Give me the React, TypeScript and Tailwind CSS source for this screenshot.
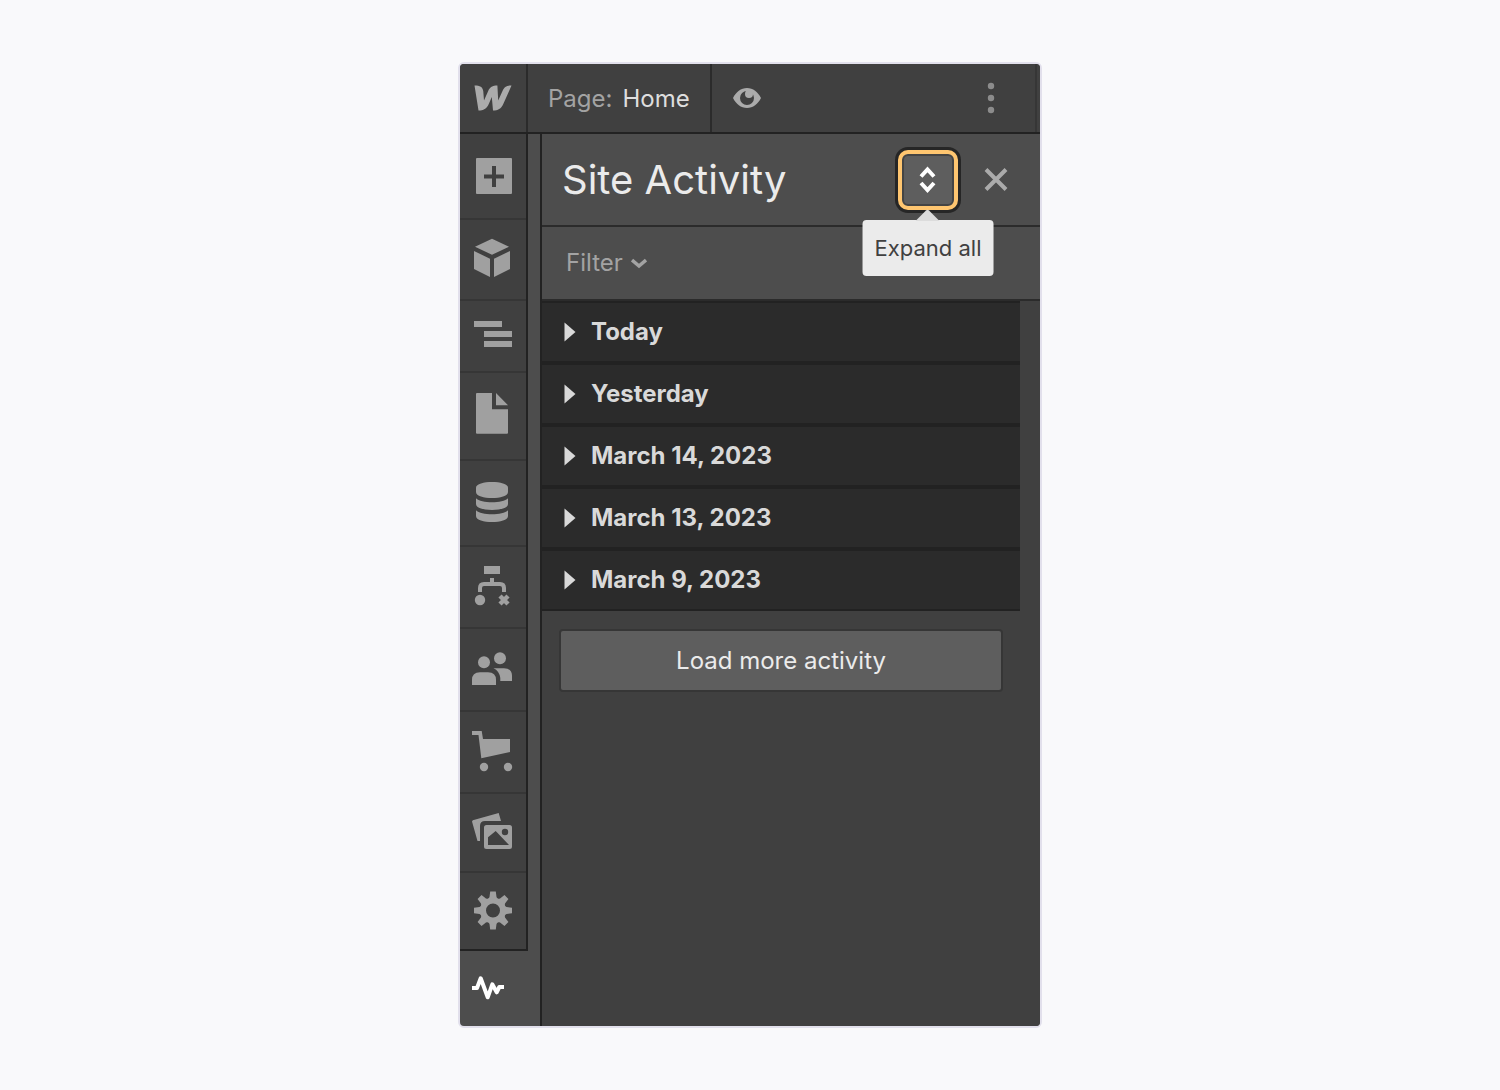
import { ReactNode, useState } from 'react'

type NavItem = {
    label: string
    height: string
    icon: ReactNode
}

const navItems: NavItem[] = [
    {
        label: 'Add elements',
        height: 'h-[86px]',
        icon: <path fillRule="evenodd" d="M6 4h34a1 1 0 0 1 1 1v34a1 1 0 0 1-1 1H6a1 1 0 0 1-1-1V5a1 1 0 0 1 1-1zM21 12v8.500h-8v4h8V33h4v-8.500h8v-4h-8V12z" />,
    },
    {
        label: 'Components',
        height: 'h-[81px]',
        icon: <path d="M4 8.700 21 .7l17 8-17 8zM3 13l16 7.700V39L3 31zM23 20.700 39 13v18l-16 8z" />,
    },
    {
        label: 'Navigator',
        height: 'h-[72px]',
        icon: <path d="M3 7h28v6H3zM13 17h28v6H13zM13 27h28v6H13z" />,
    },
    {
        label: 'Pages',
        height: 'h-[88px]',
        icon: <path d="M6-1h15v16.300h16V38.700a1 1 0 0 1-1 1H6a1 1 0 0 1-1-1V0a1 1 0 0 1 1-1zM25-1l12 12.300H25z" />,
    },
    {
        label: 'CMS',
        height: 'h-[86px]',
        icon: (
            <>
                <path d="M5 6.500C5-1 37-1 37 6.500v4.500c0 8-32 8-32 0z" />
                <path d="M5 17.300c5 5.400 27 5.400 32 0V23c0 8-32 8-32 0z" />
                <path d="M5 29.300c5 5.400 27 5.400 32 0V35c0 8-32 8-32 0z" />
            </>
        ),
    },
    {
        label: 'Logic',
        height: 'h-[82px]',
        icon: (
            <>
                <path d="M13 1h16v8H13z" />
                <path d="M9 27v-4q0-4 4-4h16q4 0 4 4v4M21 13v6" fill="none" stroke="currentColor" strokeWidth="4" />
                <circle cx="9" cy="35" r="5.200" />
                <path d="m29 31 8 8m0-8-8 8" stroke="currentColor" strokeWidth="4.500" />
            </>
        ),
    },
    {
        label: 'Users',
        height: 'h-[83px]',
        icon: (
            <>
                <circle cx="13" cy="14.300" r="6" />
                <circle cx="29" cy="10.300" r="6" />
                <path d="M1 37v-5q0-7.700 8-7.700h8q8 0 8 7.700v5z" />
                <path d="M22.500 20.300H33q8 0 8 7.500V33H29.300v-3q-1-7-6.800-9.700z" />
            </>
        ),
    },
    {
        label: 'Ecommerce',
        height: 'h-[82px]',
        icon: (
            <>
                <path d="M1 1h9.700L12 9h27v13l-28.700 6.300L7.500 5H1z" />
                <circle cx="13" cy="37" r="4.200" />
                <circle cx="37" cy="37" r="4.200" />
            </>
        ),
    },
    {
        label: 'Assets',
        height: 'h-[79px]',
        icon: (
            <>
                <path d="M1.800 9.200 27.700 2 30 10H14q-5 0-5 5v15H6.500L1 10.500z" />
                <path fillRule="evenodd" d="M15.500 14h23a2.500 2.500 0 0 1 2.500 2.500v19a2.500 2.500 0 0 1-2.500 2.500h-23a2.500 2.500 0 0 1-2.500-2.500v-19a2.500 2.500 0 0 1 2.500-2.500zM17 26.300V34h21L24.700 20zM34 17.800a3.200 3.200 0 1 0 0 6.400 3.200 3.200 0 0 0 0-6.400z" />
            </>
        ),
    },
    {
        label: 'Settings',
        height: 'h-[78px]',
        icon: (
            <>
                <circle cx="22" cy="21.500" r="10" fill="none" stroke="currentColor" strokeWidth="6" />
                {[0, 45, 90, 135, 180, 225, 270, 315].map((angle) => (
                    <path key={angle} d="M17 10.500 18.500 8l.7-5.500h5.600l.7 5.500 1.500 2.500z" transform={`rotate(${angle} 22 21.500)`} />
                ))}
            </>
        ),
    },
]

const groups = ['Today', 'Yesterday', 'March 14, 2023', 'March 13, 2023', 'March 9, 2023']

function NavIcon({ children }: { children: ReactNode }) {
    return (
        <svg className="size-11 overflow-visible" viewBox="0 0 44 44" fill="currentColor" aria-hidden="true">
            {children}
        </svg>
    )
}

function TopBar() {
    return (
        <header className="flex h-[70px] border-b-2 border-[#222222] bg-[#404040]">
            <button aria-label="Webflow menu" className="flex w-[68px] items-center justify-center border-r-2 border-[#2b2b2b] text-[#ababab]">
                <svg className="h-[26px] w-[38px]" viewBox="0 0 38 26" fill="currentColor" aria-hidden="true">
                    <path d="M.5.5C6 .5 8.800 2 9.300 6.500l.7 9L14.200 6C16 2 18.500.5 23.400.5l.8 15L28.500 6C30.300 2 32.500.5 37.500.5L29.500 18.500C27 24 24 25.500 19 25.500L17.800 12 15 18.500C12.500 24 9.500 25.500 4.500 25.500z" />
                </svg>
            </button>
            <button className="flex items-center gap-[10px] border-r-2 border-[#2b2b2b] px-5 pt-px text-2xl">
                <span className="text-[#a3a3a3]">Page:</span>
                <span className="text-[#dedede]">Home</span>
            </button>
            <button aria-label="Preview" className="px-[21px] text-[#ababab]">
                <svg className="h-5 w-7" viewBox="0 0 28 20" fill="currentColor" aria-hidden="true">
                    <path fillRule="evenodd" d="M0 10C3 4 8 0 14 0s11 4 14 10c-3 6-8 10-14 10S3 16 0 10zm14-7a7 7 0 1 0 0 14 7 7 0 0 0 0-14z" />
                    <circle cx="16" cy="6" r="4" />
                </svg>
            </button>
            <div className="flex flex-1 justify-end border-r-2 border-[#363636] pr-9">
                <button aria-label="More options" className="px-1 text-[#8c8c8c]">
                    <svg className="h-8 w-2" viewBox="0 0 8 32" fill="currentColor" aria-hidden="true">
                        <circle cx="4" cy="4" r="3.200" />
                        <circle cx="4" cy="16" r="3.200" />
                        <circle cx="4" cy="28" r="3.200" />
                    </svg>
                </button>
            </div>
            <div className="w-[3px]" />
        </header>
    )
}

function Sidebar() {
    return (
        <nav className="w-[68px]">
            <div className="border-b-2 border-r-2 border-[#222222] bg-[#404040] text-[#a0a0a0]">
                {navItems.map((item) => (
                    <button
                        key={item.label}
                        aria-label={item.label}
                        className={`${item.height} flex w-full items-center justify-center border-b-2 border-[#363636] last:h-[76px] last:border-b-0`}
                    >
                        <NavIcon>{item.icon}</NavIcon>
                    </button>
                ))}
            </div>
            <button aria-label="Site Activity" className="flex h-[75px] w-[66px] items-center justify-center text-white">
                <NavIcon>
                    <path
                        d="M1 21h5l3.700-9.700 7 19 4.600-13 4.400 8 2.600-5.300H33"
                        fill="none"
                        stroke="currentColor"
                        strokeWidth="4"
                        strokeLinejoin="round"
                    />
                </NavIcon>
            </button>
        </nav>
    )
}

function ActivityPanel() {
    const [expanded, setExpanded] = useState(false)

    return (
        <section className="flex flex-1 flex-col border-l-2 border-[#222222] bg-[#404040]">
            <div className="flex h-[93px] items-center border-b-2 border-[#2b2b2b] bg-[#4d4d4d] pl-5 pr-8">
                <h1 className="flex-1 text-[40px] text-[#ebebeb]">Site Activity</h1>
                <div className="relative">
                    <button
                        aria-label="Expand all"
                        aria-describedby="expand-tip"
                        onClick={() => setExpanded(!expanded)}
                        className="flex size-[60px] items-center justify-center rounded-[10px] border-4 border-[#ffc670] bg-[#5e5e5e] text-white shadow-[0_0_0_3px_#262626,inset_0_0_0_2px_#444444]"
                    >
                        <svg className="h-7 w-5" viewBox="0 0 20 28" fill="none" stroke="currentColor" strokeWidth="4" aria-hidden="true">
                            <path d="m3 10.500 6.500-7 6.500 7M3 17l6.500 7 6.500-7" />
                        </svg>
                    </button>
                    <div
                        id="expand-tip"
                        role="tooltip"
                        className="absolute left-1/2 top-full z-10 mt-[10px] -translate-x-1/2 whitespace-nowrap rounded bg-[#ebebeb] px-3 py-3 text-[22px] leading-8 text-[#404040]"
                    >
                        <svg className="absolute -top-[11px] left-1/2 h-3 w-6 -translate-x-1/2 text-[#dcdcdc]" viewBox="0 0 24 12" fill="currentColor" aria-hidden="true">
                            <path d="M0 12 10.500 1.500q1.500-1.500 3 0L24 12z" />
                        </svg>
                        Expand all
                    </div>
                </div>
                <button aria-label="Close" className="ml-[26px] text-[#ababab]">
                    <svg className="size-6" viewBox="0 0 24 24" fill="none" stroke="currentColor" strokeWidth="4" aria-hidden="true">
                        <path d="m2 1.500 20 20M22 1.500l-20 20" />
                    </svg>
                </button>
            </div>

            <div className="flex h-[74px] items-center border-b-2 border-[#2b2b2b] bg-[#4d4d4d] px-6">
                <button className="flex items-center gap-2 text-2xl text-[#a3a3a3]">
                    Filter
                    <svg className="h-3 w-4" viewBox="0 0 16 12" fill="none" stroke="currentColor" strokeWidth="3.500" aria-hidden="true">
                        <path d="m1 3 7 6 7-6" />
                    </svg>
                </button>
            </div>

            <div className="mr-5">
                <ul className="bg-[#2b2b2b]">
                    {groups.map((group) => (
                        <li key={group} className="border-y-2 border-[#222222]">
                            <button aria-expanded={expanded} className="flex h-[58px] w-full items-center gap-[15px] px-[22px] text-2xl font-bold text-[#d9d9d9]">
                                <svg className="h-5 w-3" viewBox="0 0 12 20" fill="currentColor" aria-hidden="true">
                                    <path d="M.500.500 11.500 10 .500 19.500z" />
                                </svg>
                                {group}
                            </button>
                        </li>
                    ))}
                </ul>
                <div className="px-[17px] pt-[18px]">
                    <button className="h-[63px] w-full rounded border-2 border-[#363636] bg-[#5e5e5e] text-2xl text-[#ebebeb]">
                        Load more activity
                    </button>
                </div>
            </div>
        </section>
    )
}

export default function App() {
    return (
        <div className="flex min-h-screen items-center justify-center bg-[#f9f9fb] font-['Inter',sans-serif]">
            <main className="w-full max-w-[584px] overflow-hidden rounded-md border-2 border-[#e2e0ec] bg-[#4d4d4d]">
                <TopBar />
                <div className="flex">
                    <Sidebar />
                    <div className="w-3" />
                    <ActivityPanel />
                </div>
            </main>
        </div>
    )
}
